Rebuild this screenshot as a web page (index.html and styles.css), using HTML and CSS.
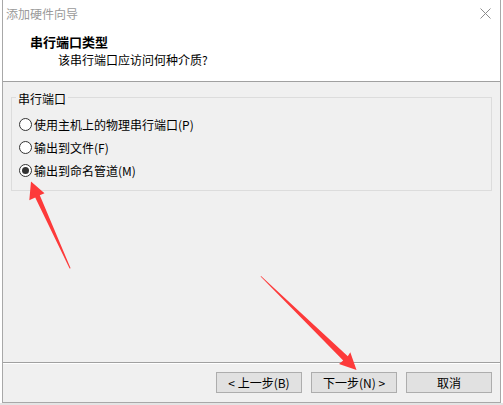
FILE: index.html
```html
<!DOCTYPE html>
<html lang="zh-cmn-Hans">
<head>
    <meta charset="UTF-8">
    <title>添加硬件向导</title>
    <link rel="stylesheet" href="styles.css">
</head>

<body>
<div class="window">
    <div class="titlebar">
        <span class="title">添加硬件向导</span>
        <svg class="close" width="11" height="11" viewBox="0 0 11 11"><path d="M0.5 0.5L10.5 10.5M10.5 0.5L0.5 10.5" stroke="#8c8c8c" stroke-width="1"/></svg>
    </div>
    <div class="header">
        <div class="head-title">串行端口类型</div>
        <div class="head-sub">该串行端口应访问何种介质?</div>
    </div>
    <div class="content">
        <fieldset class="group">
            <legend>串行端口</legend>
            <label class="radio"><span class="circle"></span>使用主机上的物理串行端口(P)</label>
            <label class="radio"><span class="circle"></span>输出到文件(F)</label>
            <label class="radio checked"><span class="circle"></span>输出到命名管道(M)</label>
        </fieldset>
    </div>
    <div class="footer">
        <button class="btn">&lt; 上一步(B)</button>
        <button class="btn">下一步(N) &gt;</button>
        <button class="btn">取消</button>
    </div>
</div>
<div class="desk"></div>

<!-- red annotation arrows drawn over the dialog -->
<svg class="marks" width="503" height="405" viewBox="0 0 503 405">
    <polygon fill="#fd3a3a" points="31,181.5 44.5,193.3 39.8,195.2 70.6,268.3 69.6,268.6 35.2,197.6 29.3,200.2"/>
    <polygon fill="#fd3a3a" points="261,276 347.8,356.2 350.3,352.3 356.5,370 339,364 343.2,360.6 260.6,276.6"/>
</svg>
</body>
</html>
```

FILE: styles.css
```css
html,body{margin: 0; padding: 0; background: #fff}
body{font-family: "Noto Sans CJK SC", sans-serif; font-size: 12px; color: #000; position: relative; width: 503px; height: 405px; overflow: hidden}

.window{margin-left: 2px; width: 499px; height: 403px; box-sizing: border-box; border: 1px solid #a8a8a8; border-top: none; background: #f0f0f0; display: flex; flex-direction: column}

.titlebar{height: 27px; background: #fff; display: flex; align-items: center; justify-content: space-between; padding: 0 9px 0 3px}
.titlebar .title{color: #9a9a9a; line-height: 27px; font-size: 12px}
.titlebar .close{display: block; margin-top: -1px}

.header{background: #fff; height: 55px; box-sizing: border-box; padding-top: 6px; border-bottom: 1px solid #a0a0a0}
.head-title{padding-left: 27px; font-size: 13px; font-weight: bold; line-height: 18px}
.head-sub{padding-left: 55px; line-height: 18px}

.content{flex: 1; padding: 5px 8px 0}
.group{margin: 0; padding: 6px 7px 8px; border: 1px solid #dcdcdc}
.group legend{margin-left: -3px; padding: 4px 2px 0; line-height: 16px}

.radio{display: flex; align-items: center; gap: 2px; height: 23px; line-height: 23px}
.radio .circle{width: 13px; height: 13px; box-sizing: border-box; border: 1px solid #333; border-radius: 50%; background: #fff; display: flex; align-items: center; justify-content: center}
.radio.checked .circle:after{content: ""; width: 7px; height: 7px; border-radius: 50%; background: #333}

.footer{border-top: 1px solid #a0a0a0; box-shadow: inset 0 1px #fff; padding: 9px 8px 9px 0; display: flex; justify-content: flex-end; gap: 9px}
.btn{width: 86px; height: 21px; margin: 0; padding: 0; border: 1px solid #adadad; background: #e1e1e1; font-family: "Noto Sans CJK SC", sans-serif; font-size: 12px; line-height: 19px; color: #000}

.desk{height: 2px; background: #e4e4e4}
.marks{position: absolute; left: 0; top: 0; pointer-events: none}
```
